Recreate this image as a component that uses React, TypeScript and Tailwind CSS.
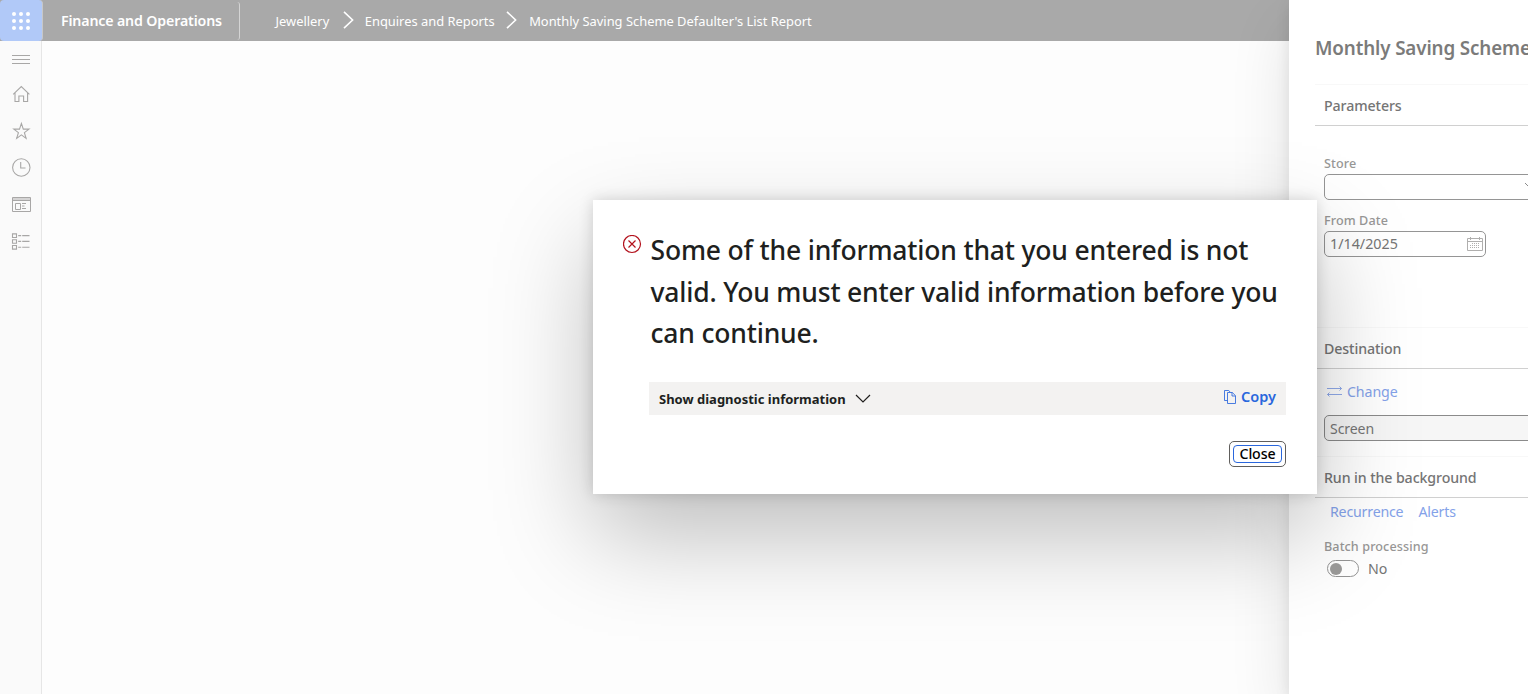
import type { ReactNode } from 'react';

const HomeIcon = () => (
  <svg width="20" height="20" viewBox="0 0 20 20" fill="none" stroke="currentColor" strokeWidth="1.1">
    <path d="M2.2 10.4 10.300 2.500l8.100 7.900M4 8.900v8.600h3.900v-5.500h4.700v5.500h4V8.900" />
  </svg>
);

const StarIcon = () => (
  <svg width="20" height="20" viewBox="0 0 20 20" fill="none" stroke="currentColor" strokeWidth="1.1">
    <path d="M10.400 2.400l1.900 5.700H18l-4.600 3.500 1.700 5.800-4.700-3.500-4.700 3.500 1.700-5.800L2.800 8.100h5.700z" />
  </svg>
);

const ClockIcon = () => (
  <svg width="20" height="20" viewBox="0 0 20 20" fill="none" stroke="currentColor" strokeWidth="1.1">
    <circle cx="10.300" cy="10.500" r="8.700" />
    <path d="M9.700 5v6h4.800" />
  </svg>
);

const WorkspaceIcon = () => (
  <svg width="20" height="20" viewBox="0 0 20 20" fill="none" stroke="currentColor" strokeWidth="1">
    <path d="M1.500 3.500h18v14h-18zM1.500 6.500h18M4.500 9.500h5v6h-5zM11 9.500h4M11 12h2.500M11 14.500h4" />
    <path d="M1.500 5h18" strokeWidth="2" opacity=".45" />
  </svg>
);

const ModulesIcon = () => (
  <svg width="20" height="20" viewBox="0 0 20 20" fill="none" stroke="currentColor" strokeWidth="1.1">
    <path d="M1.500 2.900h4v3.600h-4zM1.500 8.700h4v3.600h-4zM1.500 14.500h4v3.600h-4zM7.200 4.600h3M11.200 4.600h7.300M7.200 10.400h3M11.200 10.400h7.300M7.200 16.200h3M11.200 16.200h7.300" />
  </svg>
);

const Crumb = ({ children }: { children: ReactNode }) => <span className="pt-[2px] whitespace-nowrap">{children}</span>;

const CrumbArrow = () => (
  <svg width="11" height="18" viewBox="0 0 11 18" fill="none" stroke="white" strokeWidth="1.6" className="shrink-0">
    <path d="M1 .8 9.600 9 1 17.200" />
  </svg>
);

const SectionHeader = ({ children }: { children: ReactNode }) => (
  <div className="flex h-[42px] shrink-0 items-center border-t border-b border-t-black/[0.03] border-b-[#cccccc]/90 pt-[2px] pl-[9px] text-[14.2px] font-medium tracking-[-0.1px] text-[#757575]">
    {children}
  </div>
);

const FieldLabel = ({ children }: { children: ReactNode }) => (
  <div className="h-4 text-[12.6px] leading-[18px] font-medium tracking-[0.1px] text-[#989796]">{children}</div>
);

export default function App() {
  return (
    <div className="relative h-[694px] w-[1528px] overflow-hidden bg-[#fdfdfd] font-['Noto_Sans',sans-serif]">
      <header className="flex h-[41px] items-center bg-[#a9a9a9] text-white">
        <div className="flex h-[41px] w-[43px] items-center justify-center rounded-[4px] border-r border-[#c8c8c8] bg-[#b1c9f8]">
          <svg width="18" height="18" viewBox="0 0 18 18" fill="white">
            {[2, 9, 16].map((y) => [2, 9, 16].map((x) => <circle key={`${x}-${y}`} cx={x} cy={y} r="2" />))}
          </svg>
        </div>
        <div className="flex h-[38px] w-[197px] items-center rounded-r-[3px] border-r border-[#d4d4d4] pl-[18px] text-[14.2px] font-semibold tracking-[-0.15px] whitespace-nowrap">
          Finance and Operations
        </div>
        <nav className="flex items-center pl-[35.5px] text-[12.9px]">
          <Crumb>Jewellery</Crumb>
          <span className="flex w-[35.5px] justify-center pl-[2px]"><CrumbArrow /></span>
          <Crumb>Enquires and Reports</Crumb>
          <span className="flex w-[34.5px] justify-center"><CrumbArrow /></span>
          <Crumb>Monthly Saving Scheme Defaulter's List Report</Crumb>
        </nav>
      </header>

      <aside className="flex h-[653px] w-[42px] flex-col items-center border-r border-[#e6e6e6] bg-[#fafafa] pt-[14px] text-[#a8a7a6]">
        <svg width="18" height="9" viewBox="0 0 18 9" stroke="currentColor">
          <path d="M0 .5h18M0 4.500h18M0 8.500h18" />
        </svg>
        <div className="flex flex-col gap-[16.7px] pt-[20px]">
          <HomeIcon />
          <StarIcon />
          <ClockIcon />
          <WorkspaceIcon />
          <ModulesIcon />
        </div>
      </aside>

      <section className="absolute top-0 right-0 h-[694px] w-[239px] bg-white shadow-[0_26px_58px_rgba(0,0,0,0.11),0_5px_14px_rgba(0,0,0,0.09)]">
        <div className="flex h-full flex-col overflow-hidden pt-[30px] pl-[26px]">
          <h2 className="h-9 text-[18.8px] leading-9 font-semibold tracking-[-0.12px] whitespace-nowrap text-[#7b7b7a]">
            Monthly Saving Scheme
          </h2>
          <div className="mt-[18px]"><SectionHeader>Parameters</SectionHeader></div>
          <div className="h-[201px] pt-[29px] pl-[9px]">
            <FieldLabel>Store</FieldLabel>
            <div className="mt-[3px] flex h-[26px] w-[216px] items-center justify-end rounded-[5px] border border-[#959595] bg-white pr-[3px] pb-[3px]">
              <svg width="12" height="8" viewBox="0 0 12 8" fill="none" stroke="#8b8b8b"><path d="M1 1l5 5 5-5" /></svg>
            </div>
            <div className="mt-3"><FieldLabel>From Date</FieldLabel></div>
            <div className="mt-[3px] flex h-[26px] w-[162px] items-center justify-between rounded-[5px] border border-[#959595] pr-[2px] pl-[5px] text-[14.3px] text-[#757575]">
              <span>1/14/2025</span>
              <svg width="16" height="16" viewBox="0 0 16 16" fill="none" stroke="#b0afae">
                <path d="M.5 2.500h15v12H.5zM.5 5.500h15M3.500 1v3M12.500 1v3" />
                <path d="M5.500 7v6M7.500 7v6M9.500 7v6M11.500 7v6M3.500 9v4" strokeDasharray="1 1" />
              </svg>
            </div>
          </div>
          <SectionHeader>Destination</SectionHeader>
          <div className="h-[87px] pt-3 pl-[9px]">
            <div className="flex h-[21px] items-center gap-[5px] pl-[3px] text-[14.2px] tracking-[-0.1px] text-[#84a2e9]">
              <svg width="15" height="12" viewBox="0 0 15 12" fill="none" stroke="currentColor" strokeWidth=".9">
                <path d="M0 2.500h14.500M12.500 .5l2 2-2 2M15 8.500H.5M2.500 6.500l-2 2 2 2" />
              </svg>
              Change
            </div>
            <div className="mt-[13px] flex h-[26px] w-[216px] items-center rounded-[5px] border border-[#8b8b8b] bg-[#f6f6f6] pt-[2px] pl-[5px] text-[14.1px] tracking-[-0.1px] text-[#757575]">
              Screen
            </div>
          </div>
          <SectionHeader>Run in the background</SectionHeader>
          <div className="mt-[3px] flex h-[21px] items-center gap-[15px] pl-[15px] text-[14.2px] tracking-[-0.2px] text-[#84a2e9]">
            <span>Recurrence</span>
            <span>Alerts</span>
          </div>
          <div className="pt-4 pl-[9px]">
            <FieldLabel>Batch processing</FieldLabel>
            <div className="mt-[4px] flex h-[21px] items-center pl-[3px]">
              <span className="flex h-[17px] w-8 items-center rounded-full border border-[#959595] pl-[2px]">
                <span className="h-3 w-3 rounded-full bg-[#9c9b9a]" />
              </span>
              <span className="pt-px pl-[9px] text-[14.2px] text-[#757575]">No</span>
            </div>
          </div>
        </div>
      </section>

      <div role="alertdialog" className="absolute top-[200px] left-[593px] h-[294px] w-[724px] bg-white shadow-[0_42px_92px_rgba(0,0,0,0.25),0_0_14px_rgba(0,0,0,0.16)]">
        <div className="flex pt-[30px] pl-[30px]">
          <svg width="19" height="19" viewBox="0 0 19 19" fill="none" stroke="#b3121d" className="mt-[5px] mr-[8.5px] shrink-0">
            <circle cx="9" cy="9" r="8.500" strokeWidth="1.200" />
            <path d="M5.500 5.500l7 7M12.500 5.500l-7 7" strokeWidth="1.200" />
          </svg>
          <h1 className="text-[26.5px] leading-[41.6px] font-medium tracking-[-0.18px] whitespace-nowrap text-[#201f1e]">
            Some of the information that you entered is not<br />
            valid. You must enter valid information before you<br />
            can continue.
          </h1>
        </div>
        <div className="mt-[27px] ml-[56px] flex h-[33px] w-[637px] items-center justify-between bg-[#f3f2f1] pr-[10px] pl-[10px]">
          <div className="flex items-center gap-[9px] text-[13px] font-bold text-[#201f1e]">
            <span className="pt-[2px]">Show diagnostic information</span>
            <svg width="16" height="9" viewBox="0 0 16 9" fill="none" stroke="#201f1e"><path d="M1 1l7 7 7-7" strokeWidth="1.200" /></svg>
          </div>
          <div className="flex items-center gap-[5px] pb-[3px] text-[14.500px] font-semibold text-[#2a67dd]">
            <svg width="12" height="14" viewBox="0 0 12 14" fill="none" stroke="#2a67dd" strokeWidth=".85">
              <path d="M3.500 10.500h-3V.5h4.300l1.200 1.500M3.500 2.500h4.800l3.200 3.200v7.800h-8zM8 2.500v3.500h3.500" />
            </svg>
            <span>Copy</span>
          </div>
        </div>
        <div className="mt-[26px] ml-[636px] flex h-[26px] w-[57px] rounded-[5px] border border-[#605e5c] p-[3px]">
          <button className="flex flex-1 items-center justify-center rounded-[4px] border border-[#2a67dd] text-[14.200px] font-medium tracking-[-0.1px] text-black">
            Close
          </button>
        </div>
      </div>
    </div>
  );
}
